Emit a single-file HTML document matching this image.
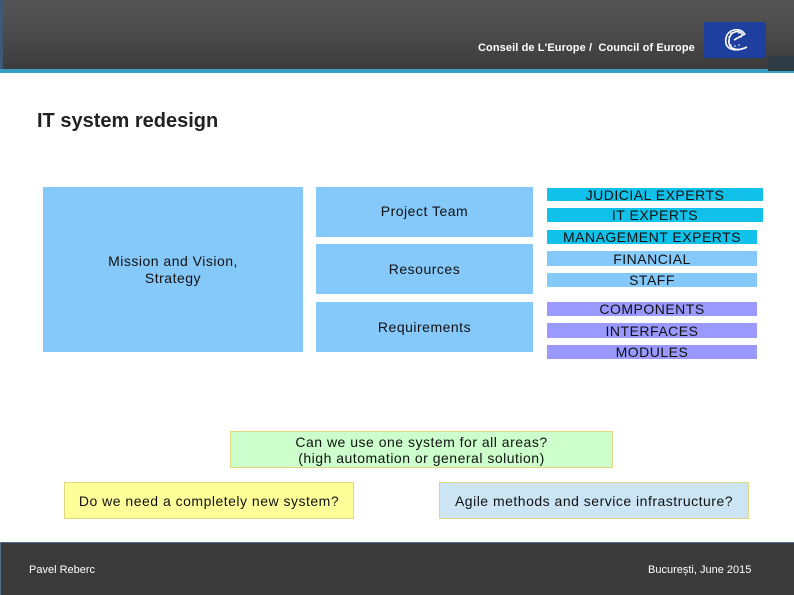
<!DOCTYPE html>
<html><head><meta charset="utf-8"><style>
*{margin:0;padding:0;box-sizing:border-box}
body{width:794px;height:595px;position:relative;background:#fff;font-family:"Liberation Sans",sans-serif;overflow:hidden}
.a{position:absolute}
.hdr{left:0;top:0;width:794px;height:70px;background:linear-gradient(#555 0%,#4a4a4a 50%,#3b3b3b 100%);border-left:3px solid #3c5a78}
.line{left:0;top:69px;width:794px;height:4px;background:#35a0c4}
.c{display:flex;align-items:center;justify-content:center;text-align:center;color:#111;letter-spacing:0.5px;white-space:nowrap}
.b{background:#85c9fa;font-size:14px}
.r{font-size:14px;line-height:14px;color:#111}
.cy{background:#11c1ea}.lb{background:#85c9fa}.pu{background:#9999ff}
</style></head><body>
<div class="a hdr"></div>
<div class="a line"></div>
<div class="a" style="left:768px;top:56px;width:26px;height:15px;background:#2e3a44"></div>
<div class="a" style="left:478px;top:42px;color:#fff;font-size:11px;font-weight:bold;letter-spacing:0.1px">Conseil de L'Europe /&nbsp; Council of Europe</div>
<div class="a" style="left:704px;top:22px;width:62px;height:36px;background:#1f3f9f">
<svg width="62" height="36"><g fill="#fff"><circle cx="31" cy="10" r=".8"/><circle cx="35" cy="11" r=".8"/><circle cx="37" cy="15" r=".8"/><circle cx="27" cy="11" r=".8"/><circle cx="25" cy="15" r=".8"/><circle cx="25" cy="19" r=".8"/><circle cx="27" cy="23" r=".8"/><circle cx="31" cy="24" r=".8"/><circle cx="35" cy="23" r=".8"/></g>
<path d="M41 13 C38 5 24 6 22 16 C20 27 30 31 43 25 C33 30 24 27 25 18 C26 9 35 7 39 13 L30 18" fill="none" stroke="#fff" stroke-width="1.6"/></svg></div>
<div class="a" style="left:37px;top:110px;font-size:20px;font-weight:bold;color:#222">IT system redesign</div>
<div class="a c b" style="left:43px;top:187px;width:260px;height:165px;line-height:17px">Mission and Vision,<br>Strategy</div>
<div class="a c b" style="left:316px;top:187px;width:217px;height:50px;padding-bottom:2px">Project Team</div>
<div class="a c b" style="left:316px;top:244px;width:217px;height:50px">Resources</div>
<div class="a c b" style="left:316px;top:302px;width:217px;height:50px">Requirements</div>
<div class="a c r cy" style="left:547px;top:188px;width:216px;height:13px">JUDICIAL EXPERTS</div>
<div class="a c r cy" style="left:547px;top:208px;width:216px;height:14px">IT EXPERTS</div>
<div class="a c r cy" style="left:547px;top:230px;width:210px;height:14px">MANAGEMENT EXPERTS</div>
<div class="a c r lb" style="left:547px;top:251px;width:210px;height:15px">FINANCIAL</div>
<div class="a c r lb" style="left:547px;top:273px;width:210px;height:14px">STAFF</div>
<div class="a c r pu" style="left:547px;top:302px;width:210px;height:14px">COMPONENTS</div>
<div class="a c r pu" style="left:547px;top:323px;width:210px;height:15px">INTERFACES</div>
<div class="a c r pu" style="left:547px;top:345px;width:210px;height:14px">MODULES</div>
<div class="a c" style="left:230px;top:431px;width:383px;height:37px;background:#ccffcc;border:1px solid #e0d880;font-size:14px;line-height:16px">Can we use one system for all areas?<br>(high automation or general solution)</div>
<div class="a c" style="left:64px;top:482px;width:290px;height:37px;background:#ffff99;border:1px solid #e0d880;font-size:14px">Do we need a completely new system?</div>
<div class="a c" style="left:439px;top:482px;width:310px;height:37px;background:#cce5f5;border:1px solid #e0d880;font-size:14px">Agile methods and service infrastructure?</div>
<div class="a" style="left:0;top:542px;width:794px;height:53px;background:#3a3a3b;border-top:1px solid #50708a;border-left:1px solid #50708a"></div>
<div class="a" style="left:29px;top:564px;color:#fff;font-size:11px">Pavel Reberc</div>
<div class="a" style="left:648px;top:564px;color:#fff;font-size:11px">București, June 2015</div>
</body></html>
